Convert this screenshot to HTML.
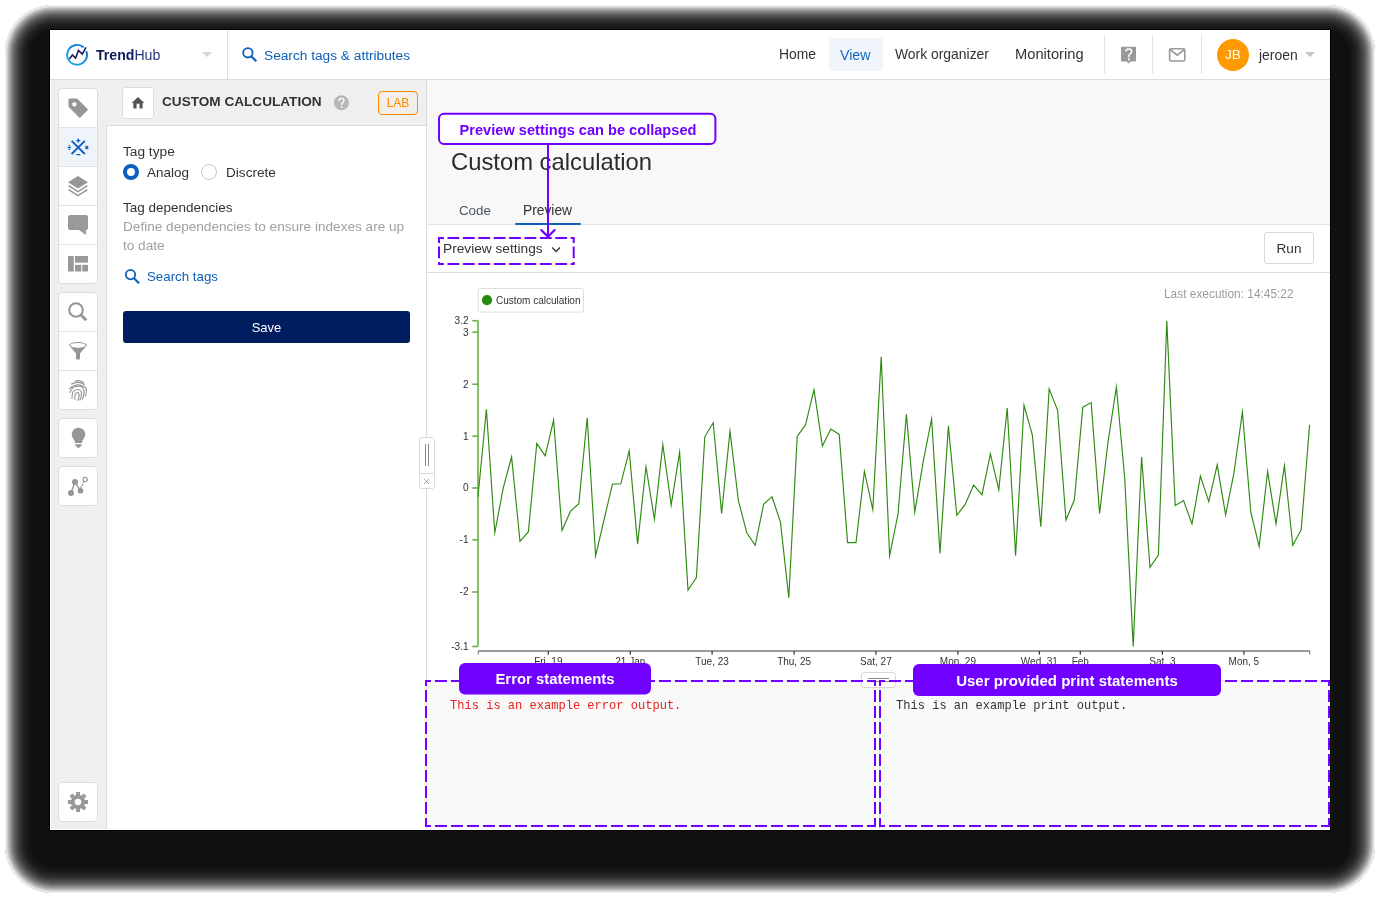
<!DOCTYPE html>
<html><head><meta charset="utf-8">
<style>
html,body{margin:0;padding:0}
body{width:1380px;height:900px;background:#fff;position:relative;overflow:hidden;font-family:"Liberation Sans",sans-serif;color:#333}
.a{position:absolute}
.t{position:absolute;white-space:nowrap;line-height:1;will-change:transform}
svg{will-change:transform}
#shadow{position:absolute;left:5px;top:5px;width:1370px;height:888px;border-radius:48px;background:rgb(16,16,16);box-shadow:inset 0 0 0 1px rgba(255,255,255,0.623),inset 0 0 0 2px rgba(255,255,255,0.384),inset 0 0 0 3px rgba(255,255,255,0.271),inset 0 0 0 4px rgba(255,255,255,0.213),inset 0 0 0 5px rgba(255,255,255,0.157),inset 0 0 0 6px rgba(255,255,255,0.136),inset 0 0 0 7px rgba(255,255,255,0.104),inset 0 0 0 8px rgba(255,255,255,0.094),inset 0 0 0 9px rgba(255,255,255,0.073),inset 0 0 0 10px rgba(255,255,255,0.068),inset 0 0 0 11px rgba(255,255,255,0.048),inset 0 0 0 12px rgba(255,255,255,0.045),inset 0 0 0 13px rgba(255,255,255,0.043),inset 0 0 0 14px rgba(255,255,255,0.034),inset 0 0 0 15px rgba(255,255,255,0.033),inset 0 0 0 16px rgba(255,255,255,0.032),inset 0 0 0 17px rgba(255,255,255,0.021),inset 0 0 0 18px rgba(255,255,255,0.021),inset 0 0 0 19px rgba(255,255,255,0.020),inset 0 0 0 20px rgba(255,255,255,0.020),inset 0 0 0 21px rgba(255,255,255,0.012),inset 0 0 0 22px rgba(255,255,255,0.012),inset 0 0 0 23px rgba(255,255,255,0.011),inset 0 0 0 24px rgba(255,255,255,0.011),inset 0 0 0 25px rgba(255,255,255,0.011),inset 0 0 0 26px rgba(255,255,255,0.006),inset 0 0 0 27px rgba(255,255,255,0.006),inset 0 0 0 28px rgba(255,255,255,0.005),inset 0 0 0 29px rgba(255,255,255,0.005),inset 0 0 0 30px rgba(255,255,255,0.005),inset 0 0 0 31px rgba(255,255,255,0.005),inset 0 0 0 32px rgba(255,255,255,0.005),inset 0 0 0 33px rgba(255,255,255,0.005),inset 0 0 0 34px rgba(255,255,255,0.005),inset 0 0 0 35px rgba(255,255,255,0.005),inset 0 0 0 36px rgba(255,255,255,0.003),inset 0 0 0 37px rgba(255,255,255,0.003),inset 0 0 0 38px rgba(255,255,255,0.003),inset 0 0 0 39px rgba(255,255,255,0.003),inset 0 0 0 40px rgba(255,255,255,0.003),inset 0 0 0 41px rgba(255,255,255,0.003),inset 0 0 0 42px rgba(255,255,255,0.003),inset 0 0 0 43px rgba(255,255,255,0.003),inset 0 0 0 44px rgba(255,255,255,0.003),inset 0 0 0 45px rgba(255,255,255,0.003)}
.box{position:absolute;background:#fff;border:1px solid #dcdcdc;border-radius:4px;box-sizing:border-box}
.sep{position:absolute;left:0;right:0;height:1px;background:#e2e2e2}
.ic{position:absolute;left:0;width:38px;height:39px}
</style></head>
<body>
<div id="shadow"></div>
<!-- window -->
<div class="a" style="left:49px;top:29px;width:1282px;height:802px;background:#000"></div>
<div class="a" style="left:50px;top:30px;width:1280px;height:800px;background:#fff"></div>

<!-- TOP BAR -->
<div class="a" style="left:50px;top:79px;width:1280px;height:1px;background:#dcdcdc"></div>
<div class="a" style="left:227px;top:30px;width:1px;height:49px;background:#dcdcdc"></div>

<svg class="a" style="left:60px;top:40px" width="36" height="30" viewBox="60 40 36 30">
 <defs><linearGradient id="lg" x1="0" y1="1" x2="1" y2="0"><stop offset="0" stop-color="#18b4e8"/><stop offset="1" stop-color="#0b6ccc"/></linearGradient></defs>
 <path d="M86.28 51.09 A9.9 9.9 0 1 1 83.72 47.44" fill="none" stroke="url(#lg)" stroke-width="1.95"/>
 <path d="M69.35 58.9 L72.4 55 L75.6 58.05 L78.45 50.4 L82.35 54.1 L85.96 47.35" fill="none" stroke="#1b1d5e" stroke-width="1.6" stroke-linejoin="miter"/>
</svg>
<div class="t" style="left:95.5px;top:48px;font-size:14.1px;color:#0d1a5c;letter-spacing:0px"><b>Trend</b><span style="color:#24357a">Hub</span></div>
<svg class="a" style="left:202px;top:52px" width="10" height="5"><path d="M0 0H10L5 5Z" fill="#d6d6d6"/></svg>
<svg class="a" style="left:240px;top:46px" width="20" height="18" viewBox="240 46 20 18">
 <circle cx="247.9" cy="52.8" r="4.7" fill="none" stroke="#0d5fb8" stroke-width="1.8"/>
 <path d="M251.4 56.4 L256.3 61.3" stroke="#0d5fb8" stroke-width="2.1"/>
</svg>
<div class="t" style="left:264px;top:49px;font-size:13.7px;color:#0d5fb8">Search tags &amp; attributes</div>

<div class="a" style="left:829px;top:38px;width:54px;height:33px;background:#f0f5fb;border-radius:3px"></div>
<div class="t" style="left:779px;top:48px;font-size:13.9px;color:#333">Home</div>
<div class="t" style="left:840px;top:47.7px;font-size:14.2px;color:#1565c0">View</div>
<div class="t" style="left:895px;top:48px;font-size:13.9px;color:#333">Work organizer</div>
<div class="t" style="left:1014.5px;top:47.4px;font-size:14.7px;color:#333">Monitoring</div>
<div class="a" style="left:1104px;top:35px;width:1px;height:39px;background:#e2e2e2"></div>
<div class="a" style="left:1152px;top:35px;width:1px;height:39px;background:#e2e2e2"></div>
<div class="a" style="left:1201px;top:35px;width:1px;height:39px;background:#e2e2e2"></div>
<svg class="a" style="left:1120px;top:46px" width="18" height="19" viewBox="1120 46 18 19">
 <path d="M1122 46.7 H1135 Q1136 46.7 1136 47.7 V60.4 Q1136 61.4 1135 61.4 H1130.6 L1128.6 63.6 L1126.6 61.4 H1122 Q1121 61.4 1121 60.4 V47.7 Q1121 46.7 1122 46.7Z" fill="#999"/>
 <path d="M1126 51.6 Q1126 49.1 1128.8 49.1 Q1131.6 49.1 1131.6 51.5 Q1131.6 53.2 1129.9 54.1 Q1128.9 54.7 1128.9 56 V57.2" fill="none" stroke="#fff" stroke-width="1.5"/><rect x="1128" y="58.4" width="1.8" height="1.8" fill="#fff"/>
</svg>
<svg class="a" style="left:1167px;top:46px" width="20" height="18" viewBox="1167 46 20 18">
 <rect x="1169.6" y="48.8" width="15.2" height="12.2" rx="1.5" fill="none" stroke="#9a9a9a" stroke-width="1.6"/>
 <path d="M1170 49.5 L1177.2 55.2 L1184.4 49.5" fill="none" stroke="#9a9a9a" stroke-width="1.6"/>
</svg>
<div class="a" style="left:1217px;top:39px;width:32px;height:32px;border-radius:50%;background:#ff9900"></div>
<div class="t" style="left:1217px;top:48.3px;width:32px;text-align:center;font-size:13.6px;color:#fff">JB</div>
<div class="t" style="left:1259px;top:49px;font-size:13.9px;color:#333">jeroen</div>
<svg class="a" style="left:1305px;top:52px" width="10" height="5"><path d="M0 0H10L5 5Z" fill="#c4c4c4"/></svg>

<!-- sidebar -->
<div class="a" style="left:51px;top:80px;width:55px;height:749px;background:#efefef"></div>
<div class="a" style="left:106px;top:125px;width:1px;height:704px;background:#dcdcdc"></div>
<div class="box" style="left:58px;top:88px;width:40px;height:196px"></div>
<div class="a" style="left:59px;top:128px;width:38px;height:38px;background:#eef4fa"></div>
<div class="a" style="left:59px;top:127px;width:38px;height:1px;background:#e2e2e2"></div>
<div class="a" style="left:59px;top:166px;width:38px;height:1px;background:#e2e2e2"></div>
<div class="a" style="left:59px;top:205px;width:38px;height:1px;background:#e2e2e2"></div>
<div class="a" style="left:59px;top:244px;width:38px;height:1px;background:#e2e2e2"></div>
<div class="box" style="left:58px;top:292px;width:40px;height:118px"></div>
<div class="a" style="left:59px;top:331px;width:38px;height:1px;background:#e2e2e2"></div>
<div class="a" style="left:59px;top:370px;width:38px;height:1px;background:#e2e2e2"></div>
<div class="box" style="left:58px;top:418px;width:40px;height:40px"></div>
<div class="box" style="left:58px;top:466px;width:40px;height:40px"></div>
<div class="box" style="left:58px;top:782px;width:40px;height:40px"></div>
<svg class="a" style="left:0;top:0" width="110" height="830" viewBox="0 0 110 830">
 <g fill="#969696">
  <path d="M69.6 98.4 H76.4 Q77 98.4 77.4 98.8 L87.6 109 Q88.1 109.6 87.6 110.2 L80.4 117.4 Q79.8 118 79.2 117.4 L69 107.2 Q68.5 106.8 68.5 106.2 V99.5 Q68.5 98.4 69.6 98.4Z M74.4 102.2 A2.2 2.2 0 1 0 74.41 102.2Z"/>
 </g>
 <g stroke="#0d5fc0" fill="none" stroke-width="1.9">
  <path d="M71.6 140.8 L84.8 154 M84.8 140.8 L71.6 154"/>
 </g>
 <g stroke="#0d5fc0" fill="none" stroke-width="1.4">
  <path d="M76.3 140.6 H80.3 M78.3 138.6 V142.6 M76.3 154.6 H80.3 M67.6 147.5 H71 M85.4 146.1 L88.2 148.9 M88.2 146.1 L85.4 148.9"/>
 </g>
 <g fill="#0d5fc0"><circle cx="69.3" cy="145.5" r=".75"/><circle cx="69.3" cy="149.5" r=".75"/></g>
 <g fill="#969696">
  <path d="M68 182.3 L78 176 L88 182.3 L78 188.5Z"/>
 </g>
 <g stroke="#969696" fill="none" stroke-width="1.7">
  <path d="M68.6 185.6 L78 191.6 L87.4 185.6 M68.6 189.6 L78 195.6 L87.4 189.6"/>
 </g>
 <g fill="#999">
  <path d="M70 215 H86 Q88 215 88 217 V228 Q88 230 86 230 H85.9 V234.9 L79 230 H70 Q68 230 68 228 V217 Q68 215 70 215Z"/>
  <rect x="68" y="256" width="5.8" height="15.5"/>
  <rect x="75" y="256" width="13" height="6.7"/>
  <rect x="75" y="264.8" width="6.3" height="6.7"/>
  <rect x="82.3" y="264.8" width="5.7" height="6.7"/>
 </g>
 <g stroke="#969696" fill="none">
  <circle cx="76" cy="310" r="6.8" stroke-width="2.1"/>
  <path d="M81 315 L86.3 320.3" stroke-width="3"/>
 </g>
 <g fill="#969696">
  <path d="M69.1 345.3 A8.9 3.3 0 0 1 86.9 345.3 L80 353.5 V358.5 Q80 359.4 79 359.4 H77 Q76 359.4 76 358.5 V353.5Z"/>
 </g>
 <ellipse cx="78" cy="345.3" rx="7.6" ry="2.4" fill="#fff"/>
 <g stroke="#969696" fill="none" stroke-width="1.2" stroke-linecap="round">
  <path d="M75.5 380.8 Q80 380 83.5 382.5"/>
  <path d="M71.5 384 Q78 380.5 84.5 384.5"/>
  <path d="M69.5 388.5 Q78 381.5 86 388 Q87 391 85.5 396"/>
  <path d="M70 392.5 Q72 386 78.5 386 Q84 386.5 84 392 Q84 396 82.5 399"/>
  <path d="M72 398.5 Q71.5 389.5 78 389.5 Q81.5 389.8 81.5 394 Q81.5 397.5 80 400"/>
  <path d="M75 399.5 Q74 392.5 78 392.5 Q79.3 393 79 396.5 Q78.8 398.5 77.8 400.3"/>
 </g>
 <g fill="#969696">
  <path d="M78.5 427.8 A6.7 6.7 0 0 1 83.8 438.6 Q82.3 440.5 82 443 H75 Q74.7 440.5 73.2 438.6 A6.7 6.7 0 0 1 78.5 427.8Z"/>
  <path d="M75.3 444.2 H81.7 V445.6 L78.5 448.2 L75.3 445.6Z"/>
 </g>
 <g stroke="#969696" fill="none" stroke-width="1.4">
  <path d="M71 493 L75 482 L80.5 490.8"/>
  <path d="M80.8 488 L84 481.5" stroke-dasharray="1.6 1.2"/>
  <circle cx="85.2" cy="479.4" r="2.1" stroke-width="1.1"/>
 </g>
 <g fill="#969696">
  <circle cx="75" cy="482" r="3"/><circle cx="71" cy="493" r="3"/><circle cx="80.5" cy="490.8" r="2.8"/>
 </g>
 <g fill="#999" transform="translate(78 802)">
  <circle r="7.2"/>
  <rect x="-2" y="-10" width="4" height="20"/>
  <rect x="-2" y="-10" width="4" height="20" transform="rotate(45)"/>
  <rect x="-2" y="-10" width="4" height="20" transform="rotate(90)"/>
  <rect x="-2" y="-10" width="4" height="20" transform="rotate(135)"/>
  <circle r="3.3" fill="#fff"/>
 </g>
</svg>

<!-- panel -->
<div class="a" style="left:106px;top:80px;width:320px;height:45px;background:#efefef"></div>
<div class="a" style="left:106px;top:125px;width:320px;height:1px;background:#dcdcdc"></div>
<div class="a" style="left:426px;top:80px;width:1px;height:749px;background:#dcdcdc"></div>
<div class="box" style="left:122px;top:87px;width:32px;height:32px;border-radius:3px"></div>
<svg class="a" style="left:130px;top:95px" width="16" height="16" viewBox="130 95 16 16">
 <path d="M138 97 L144.4 102.9 H142.6 V108.4 H139.5 V103.7 H136.6 V108.4 H133.3 V102.9 H131.6Z" fill="#555"/>
</svg>
<div class="t" style="left:162px;top:95px;font-size:13.6px;font-weight:700;color:#333">CUSTOM CALCULATION</div>
<svg class="a" style="left:333px;top:95px" width="17" height="17" viewBox="333 95 17 17">
 <circle cx="341.4" cy="102.8" r="7.5" fill="#b7b7b7"/>
 <path d="M339 100.9 Q339 98.4 341.5 98.4 Q344 98.4 344 100.6 Q344 102 342.6 102.9 Q341.6 103.5 341.6 104.6 V105.1" fill="none" stroke="#fff" stroke-width="1.4"/><rect x="340.75" y="106.1" width="1.7" height="1.7" fill="#fff"/>
</svg>
<div class="a" style="left:378px;top:91px;width:40px;height:24px;box-sizing:border-box;border:1.5px solid #ff8a00;border-radius:4px;background:#f3eee9"></div>
<div class="t" style="left:378px;top:97px;width:40px;text-align:center;font-size:12px;color:#ff8a00">LAB</div>

<div class="t" style="left:123px;top:145px;font-size:13.7px;color:#333">Tag type</div>
<div class="a" style="left:123px;top:164px;width:16px;height:16px;border-radius:50%;box-sizing:border-box;border:4.5px solid #0d5fc0;background:#fff"></div>
<div class="t" style="left:147px;top:166px;font-size:13.5px;color:#333">Analog</div>
<div class="a" style="left:201px;top:164px;width:16px;height:16px;border-radius:50%;box-sizing:border-box;border:1px solid #c8c8c8;background:#fff"></div>
<div class="t" style="left:226px;top:166px;font-size:13.6px;color:#333">Discrete</div>
<div class="t" style="left:123px;top:201px;font-size:13.5px;color:#333">Tag dependencies</div>
<div class="t" style="left:123px;top:220px;font-size:13.6px;color:#a0a0a0">Define dependencies to ensure indexes are up</div>
<div class="t" style="left:123px;top:239px;font-size:13.6px;color:#a0a0a0">to date</div>
<svg class="a" style="left:122px;top:266px" width="20" height="19" viewBox="122 266 20 19">
 <circle cx="130.5" cy="274.6" r="4.7" fill="none" stroke="#0d5fb8" stroke-width="1.8"/>
 <path d="M134 278.2 L139 283.2" stroke="#0d5fb8" stroke-width="2.1"/>
</svg>
<div class="t" style="left:147px;top:270px;font-size:13.3px;color:#0d5fb8">Search tags</div>
<div class="a" style="left:123px;top:311px;width:287px;height:32px;background:#001e5f;border-radius:3px"></div>
<div class="t" style="left:123px;top:321px;width:287px;text-align:center;font-size:13px;color:#fff">Save</div>

<!-- main -->
<div class="a" style="left:427px;top:80px;width:903px;height:144px;background:#f8f8f8"></div>
<div class="a" style="left:427px;top:224px;width:903px;height:1px;background:#e4e4e4"></div>
<div class="a" style="left:427px;top:272px;width:903px;height:1px;background:#dcdcdc"></div>
<div class="a" style="left:427px;top:681px;width:903px;height:148px;background:#f9f9f9"></div>

<div class="t" style="left:451px;top:150px;font-size:23.8px;color:#2b2b2b">Custom calculation</div>
<div class="t" style="left:459px;top:204px;font-size:13.3px;color:#4b5660">Code</div>
<div class="t" style="left:523px;top:204px;font-size:13.8px;color:#333">Preview</div>
<div class="a" style="left:515px;top:223px;width:66px;height:2px;background:#0d5fb8;border-radius:1px"></div>
<div class="t" style="left:443px;top:241.5px;font-size:13.7px;color:#333">Preview settings</div>
<svg class="a" style="left:550px;top:245px" width="12" height="9" viewBox="550 245 12 9">
 <path d="M552.2 247.6 L556.1 251.4 L560 247.6" fill="none" stroke="#333" stroke-width="1.4"/>
</svg>
<div class="a" style="left:1264px;top:232px;width:50px;height:32px;box-sizing:border-box;border:1px solid #d8d8d8;border-radius:3px;background:#fff"></div>
<div class="t" style="left:1264px;top:242px;width:50px;text-align:center;font-size:13.6px;color:#333">Run</div>
<div class="t" style="left:1164px;top:289px;font-size:11.9px;color:#9b9b9b">Last execution: 14:45:22</div>


<!-- chart -->
<svg class="a" style="left:0;top:0" width="1380" height="900" viewBox="0 0 1380 900">
<rect x="478.2" y="288.5" width="105.3" height="23.6" rx="2" fill="#fff" stroke="#dedede" stroke-width="1"/>
<circle cx="487" cy="300.2" r="5.1" fill="#2a8a0e"/>
<text x="496" y="303.7" font-family="Liberation Sans" font-size="10" fill="#333">Custom calculation</text>
<path d="M478 320.7 V646.5" stroke="#86c068" stroke-width="2" fill="none"/>
<path d="M472.3 320.7 H478" stroke="#6cae4c" stroke-width="1.6"/>
<text x="468.6" y="324.1" text-anchor="end" font-family="Liberation Sans" font-size="10.1" fill="#333">3.2</text>
<path d="M472.3 332.2 H478" stroke="#6cae4c" stroke-width="1.6"/>
<text x="468.6" y="335.6" text-anchor="end" font-family="Liberation Sans" font-size="10.1" fill="#333">3</text>
<path d="M472.3 384.2 H478" stroke="#6cae4c" stroke-width="1.6"/>
<text x="468.6" y="387.6" text-anchor="end" font-family="Liberation Sans" font-size="10.1" fill="#333">2</text>
<path d="M472.3 436.2 H478" stroke="#6cae4c" stroke-width="1.6"/>
<text x="468.6" y="439.6" text-anchor="end" font-family="Liberation Sans" font-size="10.1" fill="#333">1</text>
<path d="M472.3 488.0 H478" stroke="#6cae4c" stroke-width="1.6"/>
<text x="468.6" y="491.4" text-anchor="end" font-family="Liberation Sans" font-size="10.1" fill="#333">0</text>
<path d="M472.3 539.8 H478" stroke="#6cae4c" stroke-width="1.6"/>
<text x="468.6" y="543.2" text-anchor="end" font-family="Liberation Sans" font-size="10.1" fill="#333">-1</text>
<path d="M472.3 592.0 H478" stroke="#6cae4c" stroke-width="1.6"/>
<text x="468.6" y="595.4" text-anchor="end" font-family="Liberation Sans" font-size="10.1" fill="#333">-2</text>
<path d="M472.3 646.5 H478" stroke="#6cae4c" stroke-width="1.6"/>
<text x="468.6" y="649.9" text-anchor="end" font-family="Liberation Sans" font-size="10.1" fill="#333">-3.1</text>
<path d="M478 651 H1310" stroke="#7a7a7a" stroke-width="1.5" fill="none"/>
<path d="M478.3 651 V654.8 M1309.7 651 V654.8" stroke="#7a7a7a" stroke-width="1"/>
<path d="M548.3 651 V654.8" stroke="#333" stroke-width="1.2"/>
<text x="548.3" y="665" text-anchor="middle" font-family="Liberation Sans" font-size="10" fill="#333">Fri, 19</text>
<path d="M630.3 651 V654.8" stroke="#333" stroke-width="1.2"/>
<text x="630.3" y="665" text-anchor="middle" font-family="Liberation Sans" font-size="10" fill="#333">21 Jan</text>
<path d="M712.1 651 V654.8" stroke="#333" stroke-width="1.2"/>
<text x="712.1" y="665" text-anchor="middle" font-family="Liberation Sans" font-size="10" fill="#333">Tue, 23</text>
<path d="M794.1 651 V654.8" stroke="#333" stroke-width="1.2"/>
<text x="794.1" y="665" text-anchor="middle" font-family="Liberation Sans" font-size="10" fill="#333">Thu, 25</text>
<path d="M875.9 651 V654.8" stroke="#333" stroke-width="1.2"/>
<text x="875.9" y="665" text-anchor="middle" font-family="Liberation Sans" font-size="10" fill="#333">Sat, 27</text>
<path d="M957.9 651 V654.8" stroke="#333" stroke-width="1.2"/>
<text x="957.9" y="665" text-anchor="middle" font-family="Liberation Sans" font-size="10" fill="#333">Mon, 29</text>
<path d="M1039.4 651 V654.8" stroke="#333" stroke-width="1.2"/>
<text x="1039.4" y="665" text-anchor="middle" font-family="Liberation Sans" font-size="10" fill="#333">Wed, 31</text>
<path d="M1080.3 651 V654.8" stroke="#333" stroke-width="1.2"/>
<text x="1080.3" y="665" text-anchor="middle" font-family="Liberation Sans" font-size="10" fill="#333">Feb</text>
<path d="M1162.4 651 V654.8" stroke="#333" stroke-width="1.2"/>
<text x="1162.4" y="665" text-anchor="middle" font-family="Liberation Sans" font-size="10" fill="#333">Sat, 3</text>
<path d="M1243.9 651 V654.8" stroke="#333" stroke-width="1.2"/>
<text x="1243.9" y="665" text-anchor="middle" font-family="Liberation Sans" font-size="10" fill="#333">Mon, 5</text>
<polyline points="478.0,496.7 486.4,409.2 494.8,532.8 503.2,488.1 511.6,457.0 520.0,541.4 528.4,531.7 536.8,443.4 545.2,455.8 553.6,420.0 562.0,530.5 570.4,511.4 578.8,503.7 587.2,417.7 595.6,555.8 604.0,520.0 612.4,484.2 620.8,483.8 629.2,450.8 637.6,544.1 646.0,466.7 654.4,519.2 662.8,444.6 671.2,505.2 679.6,452.3 688.0,590.0 696.4,577.6 704.8,436.8 713.2,422.8 721.6,513.4 730.0,431.3 738.4,500.6 746.8,532.8 755.2,545.3 763.6,504.4 772.0,496.7 780.4,521.9 788.8,597.8 797.2,436.4 805.6,424.7 814.0,389.7 822.4,446.1 830.8,429.0 839.2,434.4 847.6,542.6 856.0,542.6 864.4,471.4 872.8,509.5 881.2,356.7 889.6,555.8 898.0,514.2 906.4,414.2 914.8,512.2 923.2,461.7 931.6,418.9 940.0,553.4 948.4,425.9 956.8,515.3 965.2,504.4 973.6,485.0 982.0,494.7 990.4,453.9 998.8,489.7 1007.2,408.0 1015.6,555.8 1024.0,405.3 1032.4,435.2 1040.8,526.6 1049.2,388.9 1057.6,410.3 1066.0,520.0 1074.4,499.8 1082.8,407.2 1091.2,402.6 1099.6,513.4 1108.0,442.2 1116.4,387.0 1124.8,479.2 1133.2,646.4 1141.6,457.0 1150.0,567.4 1158.4,555.0 1166.8,320.9 1175.2,505.6 1183.6,500.6 1192.0,523.9 1200.4,476.1 1208.8,501.7 1217.2,464.8 1225.6,514.9 1234.0,472.6 1242.4,411.9 1250.8,512.2 1259.2,546.4 1267.6,471.4 1276.0,523.9 1284.4,465.6 1292.8,545.3 1301.2,529.7 1309.6,424.7" fill="none" stroke="#2e8a12" stroke-width="1.15" stroke-linejoin="miter" stroke-miterlimit="10"/>
</svg>
<!-- left resize handle -->
<div class="a" style="left:419px;top:437px;width:16px;height:52px;box-sizing:border-box;border:1px solid #dadada;border-radius:3px;background:#fff"></div>
<div class="a" style="left:420px;top:473px;width:14px;height:1px;background:#dadada"></div>
<div class="a" style="left:425px;top:444px;width:1px;height:22px;background:#8a8a8a"></div>
<div class="a" style="left:428px;top:444px;width:1px;height:22px;background:#8a8a8a"></div>
<svg class="a" style="left:423px;top:478px" width="7" height="7" viewBox="0 0 7 7"><path d="M1 1L6 6M6 1L1 6" stroke="#9a9a9a" stroke-width="0.9"/></svg>

<!-- console -->
<div class="a" style="left:427px;top:680px;width:903px;height:1px;background:#e0e0e0"></div>
<div class="a" style="left:879px;top:681px;width:1px;height:148px;background:#e0e0e0"></div>
<div class="t" style="left:450px;top:699.7px;font-family:'Liberation Mono',monospace;font-size:12.05px;color:#e8201e">This is an example error output.</div>
<div class="t" style="left:896px;top:699.7px;font-family:'Liberation Mono',monospace;font-size:12.05px;color:#333">This is an example print output.</div>
<div class="a" style="left:861px;top:672px;width:35px;height:16px;box-sizing:border-box;border:1px solid #dadada;border-radius:3px;background:#fff"></div>
<div class="a" style="left:868px;top:678px;width:21px;height:1px;background:#8a8a8a"></div>
<div class="a" style="left:868px;top:681px;width:21px;height:1px;background:#8a8a8a"></div>

<!-- annotations -->
<svg class="a" style="left:0;top:0" width="1380" height="900" viewBox="0 0 1380 900">
 <g fill="none" stroke="#7000ff" stroke-width="2">
  <path d="M438 238 H574.7 M573.7 237 V265 M438 264 H574.7 M439 237 V265" stroke-dasharray="11.8 3.6" stroke-dashoffset="5.9"/>
  <path d="M425 681 H876 M875 680 V827 M425 826 H876 M426 680 V827" stroke-dasharray="12 4" stroke-dashoffset="6"/>
  <path d="M879 681 H1330 M1329 680 V827 M879 826 H1330 M880 680 V827" stroke-dasharray="12 4" stroke-dashoffset="6"/>
  <path d="M548 144.5 V237.5" stroke-width="2"/>
  <path d="M541.3 230.1 L548 236.8 L554.6 230.1" stroke-width="2.2" stroke-linecap="round" stroke-linejoin="round"/>
 </g>
 <rect x="439" y="113.8" width="276.4" height="30.2" rx="5" fill="#fff" stroke="#7000ff" stroke-width="2"/>
 <rect x="459" y="663" width="192" height="31.5" rx="6" fill="#7000ff"/>
 <rect x="913" y="664" width="308" height="32" rx="6" fill="#7000ff"/>
</svg>
<div class="t" style="left:438.5px;top:122.5px;width:278px;text-align:center;font-size:14.6px;font-weight:700;color:#7000ff">Preview settings can be collapsed</div>
<div class="t" style="left:459px;top:672px;width:192px;text-align:center;font-size:14.9px;font-weight:700;color:#fff">Error statements</div>
<div class="t" style="left:913px;top:673px;width:308px;text-align:center;font-size:15px;font-weight:700;color:#fff">User provided print statements</div>

</body></html>
